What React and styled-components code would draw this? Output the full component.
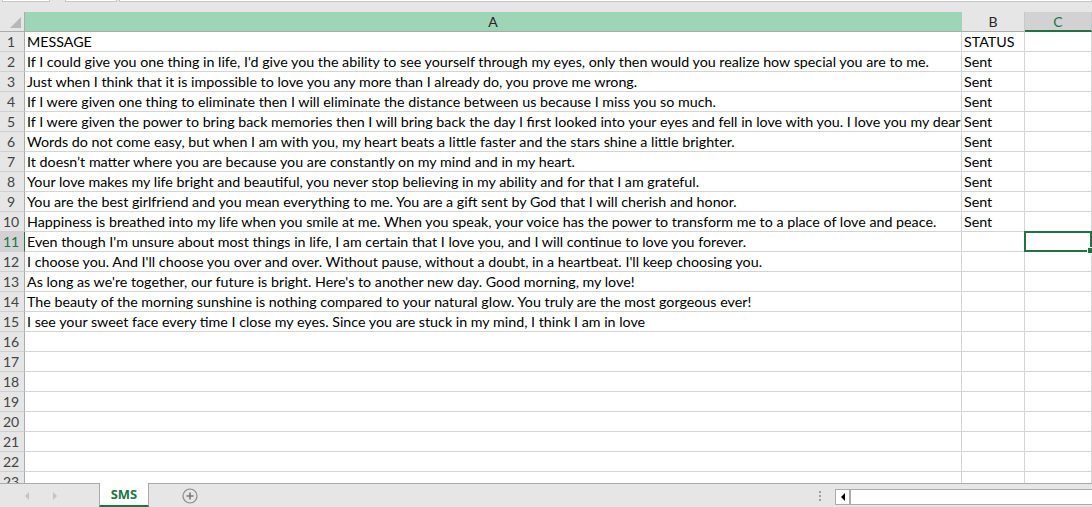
import React from "react";
import styled, { createGlobalStyle } from "styled-components";

const GREEN = "#217346";

const Global = createGlobalStyle`
  html, body { margin: 0; padding: 0; background: #fff; }
  body { font-family: Lato, "Liberation Sans", sans-serif; }
  * { box-sizing: border-box; }
`;

const Page = styled.div`
  width: 1092px;
  height: 507px;
  display: flex;
  flex-direction: column;
  overflow: hidden;
  background: #e6e6e6;
`;

const TopStrip = styled.div`
  height: 12px;
  flex: none;
  display: flex;
  align-items: flex-start;
  padding-left: 2px;
  background: #e6e6e6;
`;

const StripBox = styled.div`
  width: ${(p) => p.$w}px;
  margin-right: ${(p) => p.$gap}px;
  height: 2px;
  background: #fff;
  border: 1px solid #c6c6c6;
  border-top: none;
`;

const SheetArea = styled.div`
  flex: 1;
  overflow: hidden;
  background: #fff;
`;

const Grid = styled.div`
  display: grid;
  grid-template-columns: 25px 937px 63px 67px;
  grid-auto-rows: 20px;
`;

const Corner = styled.div`
  background: #e6e6e6;
  border-right: 1px solid #ababab;
  border-bottom: 1px solid #ababab;
  position: relative;
  &::after {
    content: "";
    position: absolute;
    right: 3px;
    bottom: 3px;
    width: 0;
    height: 0;
    border-left: 11px solid transparent;
    border-bottom: 11px solid #b8b8b8;
  }
`;

const ColHead = styled.div`
  background: ${(p) => (p.$fill ? p.$fill : p.$active ? "#d2d2d2" : "#e6e6e6")};
  color: ${(p) => (p.$active ? GREEN : "#262626")};
  border-right: 1px solid ${(p) => (p.$fill ? "#9fd5b7" : "#c8c8c8")};
  border-bottom: ${(p) => (p.$active ? `2px solid ${GREEN}` : "1px solid #ababab")};
  font-size: 14px;
  line-height: 19px;
  text-align: center;
`;

const RowHead = styled.div`
  background: ${(p) => (p.$active ? "#d2d2d2" : "#e6e6e6")};
  color: ${(p) => (p.$active ? GREEN : "#444")};
  border-right: 1px solid ${(p) => (p.$active ? GREEN : "#ababab")};
  border-bottom: 1px solid #d0d0d0;
  font-size: 14px;
  line-height: 20px;
  text-align: center;
  padding-right: 2px;
`;

const Cell = styled.div`
  position: relative;
  border-right: 1px solid #d4d4d4;
  border-bottom: 1px solid #d4d4d4;
  font-size: 14.28px;
  line-height: 20px;
  color: #000;
  padding-left: 2px;
  white-space: nowrap;
  text-overflow: clip;
  overflow: ${(p) => (p.$selected ? "visible" : "hidden")};
  ${(p) =>
    p.$selected &&
    `
    &::before {
      content: "";
      position: absolute;
      left: -1px;
      top: -1px;
      right: -1px;
      bottom: -1px;
      border: 2px solid ${GREEN};
      z-index: 2;
    }
    &::after {
      content: "";
      position: absolute;
      right: -3px;
      bottom: -3px;
      width: 5px;
      height: 5px;
      background: ${GREEN};
      border: 1px solid #fff;
      z-index: 3;
    }
  `}
`;

const TabBar = styled.div`
  height: 24px;
  flex: none;
  display: flex;
  align-items: stretch;
  background: #e6e6e6;
  border-top: 1px solid #ababab;
`;

const NavGroup = styled.div`
  width: 99px;
  display: flex;
  align-items: center;
  padding-left: 25px;
  gap: 24px;
`;

const NavArrow = styled.div`
  width: 0;
  height: 0;
  border-top: 4px solid transparent;
  border-bottom: 4px solid transparent;
  ${(p) => (p.$dir === "left" ? "border-right: 4px solid #c4c4c4;" : "border-left: 4px solid #c4c4c4;")}
`;

const SheetTab = styled.div`
  width: 50px;
  margin-top: -1px;
  background: #fff;
  border-left: 1px solid #ababab;
  border-right: 1px solid #ababab;
  border-bottom: 2px solid ${GREEN};
  color: ${GREEN};
  font-family: "Open Sans", "Liberation Sans", sans-serif;
  font-weight: 700;
  font-size: 13px;
  display: flex;
  align-items: center;
  justify-content: center;
`;

const AddBtn = styled.div`
  margin-left: 33px;
  display: flex;
  align-items: center;
`;

const Spacer = styled.div`
  flex: 1;
`;

const Dots = styled.div`
  display: flex;
  flex-direction: column;
  justify-content: center;
  gap: 2px;
  margin-right: 14px;
  span {
    width: 2px;
    height: 2px;
    background: #a0a0a0;
  }
`;

const HScroll = styled.div`
  width: 257px;
  height: 16px;
  align-self: center;
  margin-top: 2px;
  display: flex;
  background: #fff;
  border: 1px solid #ababab;
  border-right: none;
`;

const ScrollBtn = styled.div`
  width: 15px;
  display: flex;
  align-items: center;
  justify-content: center;
  border-right: 2px solid #ababab;
  &::before {
    content: "";
    border-top: 4px solid transparent;
    border-bottom: 4px solid transparent;
    border-right: 4px solid #000;
  }
`;

const rows = [
  ["MESSAGE", "STATUS"],
  ["If I could give you one thing in life, I'd give you the ability to see yourself through my eyes, only then would you realize how special you are to me.", "Sent"],
  ["Just when I think that it is impossible to love you any more than I already do, you prove me wrong.", "Sent"],
  ["If I were given one thing to eliminate then I will eliminate the distance between us because I miss you so much.", "Sent"],
  ["If I were given the power to bring back memories then I will bring back the day I first looked into your eyes and fell in love with you. I love you my dear love.", "Sent"],
  ["Words do not come easy, but when I am with you, my heart beats a little faster and the stars shine a little brighter.", "Sent"],
  ["It doesn\u2019t matter where you are because you are constantly on my mind and in my heart.", "Sent"],
  ["Your love makes my life bright and beautiful, you never stop believing in my ability and for that I am grateful.", "Sent"],
  ["You are the best girlfriend and you mean everything to me. You are a gift sent by God that I will cherish and honor.", "Sent"],
  ["Happiness is breathed into my life when you smile at me. When you speak, your voice has the power to transform me to a place of love and peace.", "Sent"],
  ["Even though I'm unsure about most things in life, I am certain that I love you, and I will continue to love you forever.", ""],
  ["I choose you. And I'll choose you over and over. Without pause, without a doubt, in a heartbeat. I'll keep choosing you.", ""],
  ["As long as we're together, our future is bright. Here's to another new day. Good morning, my love!", ""],
  ["The beauty of the morning sunshine is nothing compared to your natural glow. You truly are the most gorgeous ever!", ""],
  ["I see your sweet face every time I close my eyes. Since you are stuck in my mind, I think I am in love", ""],
];

const allRows = [...rows];
while (allRows.length < 23) allRows.push(["", ""]);

const ACTIVE_ROW = 11;

export default function App() {
  return (
    <Page>
      <Global />
      <TopStrip>
        <StripBox $w={48} $gap={15} />
        <StripBox $w={52} $gap={2} />
        <StripBox $w={973} $gap={0} />
      </TopStrip>
      <SheetArea>
        <Grid>
          <Corner />
          <ColHead $fill="#9fd5b7">A</ColHead>
          <ColHead>B</ColHead>
          <ColHead $active>C</ColHead>
          {allRows.map((r, i) => {
            const n = i + 1;
            return (
              <React.Fragment key={n}>
                <RowHead $active={n === ACTIVE_ROW}>{n}</RowHead>
                <Cell>{r[0]}</Cell>
                <Cell>{r[1]}</Cell>
                <Cell $selected={n === ACTIVE_ROW} />
              </React.Fragment>
            );
          })}
        </Grid>
      </SheetArea>
      <TabBar>
        <NavGroup>
          <NavArrow $dir="left" />
          <NavArrow $dir="right" />
        </NavGroup>
        <SheetTab>SMS</SheetTab>
        <AddBtn>
          <svg width="16" height="16" viewBox="0 0 16 16">
            <circle cx="8" cy="8" r="7" fill="none" stroke="#8a8a8a" strokeWidth="1.2" />
            <path d="M8 4.5v7M4.5 8h7" stroke="#7a7a7a" strokeWidth="1.6" />
          </svg>
        </AddBtn>
        <Spacer />
        <Dots>
          <span />
          <span />
          <span />
        </Dots>
        <HScroll>
          <ScrollBtn />
        </HScroll>
      </TabBar>
    </Page>
  );
}
